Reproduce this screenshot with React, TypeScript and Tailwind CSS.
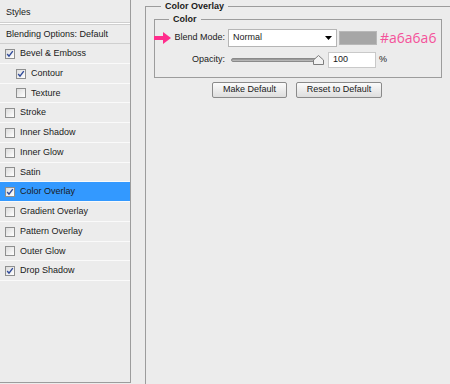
import React from "react";

type Row = { label: string; checked?: boolean; indent?: boolean; selected?: boolean };

const rows: Row[] = [
  { label: "Bevel & Emboss", checked: true },
  { label: "Contour", checked: true, indent: true },
  { label: "Texture", indent: true },
  { label: "Stroke" },
  { label: "Inner Shadow" },
  { label: "Inner Glow" },
  { label: "Satin" },
  { label: "Color Overlay", checked: true, selected: true },
  { label: "Gradient Overlay" },
  { label: "Pattern Overlay" },
  { label: "Outer Glow" },
  { label: "Drop Shadow", checked: true },
];

function CheckBox({ checked }: { checked?: boolean }) {
  return (
    <div className="w-[10px] h-[10px] border border-[#8e8f8f] bg-gradient-to-br from-[#dcdcdc] to-[#ffffff] flex items-center justify-center shrink-0">
      {checked && (
        <svg width="8" height="8" viewBox="0 0 8 8">
          <path d="M1.2 4 L3 6.2 L6.8 1.2" fill="none" stroke="#2f4a9a" strokeWidth="1.4" />
        </svg>
      )}
    </div>
  );
}

export default function App() {
  return (
    <div
      className="w-[450px] h-[384px] overflow-hidden bg-[#ececec] flex text-[9px] text-[#1a1a1a] whitespace-nowrap"
      style={{ fontFamily: '"Liberation Sans", Arial, sans-serif' }}
    >
      {/* Left styles panel */}
      <div className="w-[131px] h-[383px] border-r border-b border-[#9c9c9c] flex flex-col shrink-0">
        <div className="h-[23px] border-b border-[#cfcfcf] flex items-center pl-[6px] pt-[4px] shadow-[0_1px_0_#ffffff]">
          Styles
        </div>
        <div className="h-[20px] mt-[1px] border-t border-[#cfcfcf] border-b flex items-center pl-[6px] pt-[1px]">
          Blending Options: Default
        </div>
        {rows.map((r) => (
          <div
            key={r.label}
            className={`h-[19.75px] flex items-center gap-[5px] border-b border-[#fafafa] pt-[1px] ${
              r.indent ? "pl-[16px]" : "pl-[5px]"
            } ${r.selected ? "bg-[#3399ff]" : ""}`}
          >
            <CheckBox checked={r.checked} />
            <span>{r.label}</span>
          </div>
        ))}
      </div>

      {/* Right panel */}
      <fieldset className="ml-[14px] w-[304px] h-[420px] border border-[#9c9c9c] px-[8px] shrink-0">
        <legend className="ml-[7px] px-[4px] font-bold leading-[13px]">Color Overlay</legend>
        <fieldset className="w-[288px] h-[65px] border border-[#9c9c9c]">
          <legend className="ml-[14px] px-[4px] font-bold leading-[13px] mt-[1px]">Color</legend>
          <div className="flex items-center mt-[3px]">
            <div className="w-[70px] flex items-center justify-between">
              <svg width="17" height="12" viewBox="0 0 17 12" className="-ml-[1px]">
                <path d="M0 4 H9 V0 L17 6 L9 12 V8 H0 Z" fill="#ff2d8c" />
              </svg>
              <span>Blend Mode:</span>
            </div>
            <div className="ml-[3px] w-[109px] h-[18px] bg-white border border-[#b5b5b5] flex items-center justify-between pl-[4px] pr-[4px]">
              <span>Normal</span>
              <svg width="7" height="4" viewBox="0 0 7 4">
                <path d="M0 0 H7 L3.5 4 Z" fill="#000" />
              </svg>
            </div>
            <div className="ml-[2px] w-[38px] h-[14px] bg-[#a6a6a6] border border-[#b8b8b8]" />
            <span
              className="ml-[3px] text-[14px] text-[#f4529a] leading-none"
              style={{ fontFamily: '"Open Sans", "Liberation Sans", sans-serif' }}
            >
              #a6a6a6
            </span>
          </div>
          <div className="flex items-center mt-[5px]">
            <div className="w-[70px] text-right">Opacity:</div>
            <div className="ml-[6px] relative w-[93px] h-[12px] flex items-center">
              <div className="w-[89px] h-[4px] rounded-[2px] bg-gradient-to-b from-[#8d8d8d] to-[#c4c4c4] border border-[#8a8a8a]" />
              <svg width="11" height="10" viewBox="0 0 11 10" className="absolute right-0 top-[1px]">
                <path d="M0.5 9.5 V5 L5.5 0.5 L10.5 5 V9.5 Z" fill="#f2f2f2" stroke="#7d7d7d" />
              </svg>
            </div>
            <div className="ml-[4px] w-[48px] h-[16px] bg-white border border-[#c9c9c9] flex items-center pl-[4px]">
              100
            </div>
            <span className="ml-[3px]">%</span>
          </div>
        </fieldset>
        <div className="flex mt-[4px] pl-[58px] gap-[9px]">
          <div className="w-[75px] h-[16px] border border-[#8a8a8a] rounded-[2px] bg-gradient-to-b from-[#fbfbfb] to-[#dedede] flex items-center justify-center">
            Make Default
          </div>
          <div className="w-[86px] h-[16px] border border-[#8a8a8a] rounded-[2px] bg-gradient-to-b from-[#fbfbfb] to-[#dedede] flex items-center justify-center">
            Reset to Default
          </div>
        </div>
      </fieldset>
    </div>
  );
}
